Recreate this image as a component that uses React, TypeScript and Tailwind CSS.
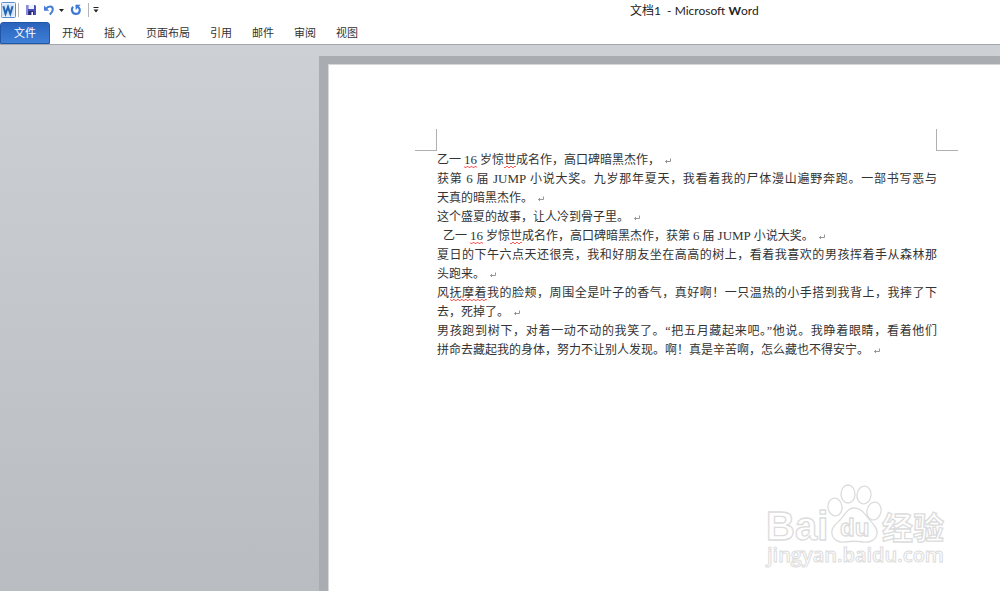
import type { ReactNode } from "react";

const tabs = ["开始", "插入", "页面布局", "引用", "邮件", "审阅", "视图"];

function Latin({ children }: { children: ReactNode }) {
  return <span className="text-[13px] leading-none">{children}</span>;
}

function Misspelt({ children }: { children: ReactNode }) {
  return (
    <span className="bg-[conic-gradient(#ff5a5a_25%,transparent_0_50%,#ff5a5a_0_75%,transparent_0)] bg-[length:4px_2px] bg-bottom bg-repeat-x pb-px">
      {children}
    </span>
  );
}

function Line({ children, full = false }: { children: ReactNode; full?: boolean }) {
  return (
    <span className={full ? "block h-[19px] whitespace-nowrap text-justify [text-align-last:justify]" : "block h-[19px] whitespace-nowrap"}>
      {children}
    </span>
  );
}

function Mark() {
  return (
    <svg viewBox="0 0 8 7" className="ml-1 inline-block h-[7px] w-2 align-[-1px]" aria-hidden="true">
      <path d="M6.5 0.5V3.5H1.5M3 2L1.5 3.5L3 5" fill="none" stroke="#8a8a8a" strokeWidth="0.9" />
    </svg>
  );
}

function WordIcon() {
  return (
    <svg viewBox="0 0 16 16" className="size-4" aria-hidden="true">
      <rect x="1.5" y="0.5" width="14" height="15" rx="1" fill="#eaf3fc" stroke="#5a8ccb" />
      <path d="M3 4h11M3 6h11M3 8h11M3 10h11M3 12h11" stroke="#b9d3ee" strokeWidth="0.8" />
      <rect x="1.5" y="2.5" width="12" height="11" fill="#cfe2f6" />
      <path d="M3.4 4.2L5.5 11.8L8 5L10.3 11.8L12.6 4.2" fill="none" stroke="#2564b4" strokeWidth="2" />
    </svg>
  );
}

function SaveIcon() {
  return (
    <svg viewBox="0 0 12 12" className="size-3" aria-hidden="true">
      <path d="M1 1H10L11 2V11H1Z" fill="#4d4fb8" />
      <path d="M1 1H3V11H1Z" fill="#8a8ce0" />
      <path d="M3.4 1H9V5H3.4Z" fill="#edf2fc" />
      <path d="M3.4 7H8.8V11H3.4Z" fill="#2b2c70" />
      <path d="M6.4 8H8V11H6.4Z" fill="#f2f4ff" />
    </svg>
  );
}

function UndoIcon() {
  return (
    <svg viewBox="0 0 12 12" className="size-3" aria-hidden="true">
      <path d="M3 5C5 1.6 9.8 1.8 9.8 5.2C9.8 7.5 8.4 8.8 6.8 10.6" fill="none" stroke="#477fd8" strokeWidth="2.1" />
      <path d="M1 1.6V6.8H6.2Z" fill="#477fd8" />
    </svg>
  );
}

function RedoIcon() {
  return (
    <svg viewBox="0 0 12 12" className="size-3" aria-hidden="true">
      <path d="M3.1 2.8C0.9 4.9 1.8 9.9 5.9 9.9C10.2 9.9 10.9 5 8 3" fill="none" stroke="#3d78d4" strokeWidth="2.1" />
      <path d="M5.4 0.8H10.6L5.8 6Z" fill="#3d78d4" />
    </svg>
  );
}

function Watermark() {
  return (
    <svg
      viewBox="0 0 190 94"
      className="absolute right-[46px] bottom-[18px] w-[190px]"
      fill="#ffffff"
      stroke="#dcdcdc"
      strokeWidth="1.3"
      aria-label="Baidu 经验"
    >
      <text x="2" y="61" fontSize="40" fontWeight="700" fontFamily="'Liberation Sans', Arial, sans-serif">Bai</text>
      <ellipse cx="71" cy="28" rx="7" ry="9" transform="rotate(-8 71 28)" />
      <ellipse cx="84" cy="15" rx="7" ry="9" />
      <ellipse cx="100" cy="16" rx="7" ry="9" transform="rotate(8 100 16)" />
      <ellipse cx="110" cy="32" rx="7" ry="9" transform="rotate(12 110 32)" />
      <path d="M90 29C83 29 81 36 76 41C71 46 67 49 68 55C69 61 75 64 81 63C87 62 93 62 99 63C106 64 112 61 113 55C114 49 109 45 105 40C100 34 97 29 90 29Z" />
      <text x="76" y="57" fontSize="24" fontWeight="700" fontFamily="'Liberation Sans', Arial, sans-serif">du</text>
      <text x="118" y="60" fontSize="31" fontWeight="700" fontFamily="'Noto Sans CJK SC', sans-serif">经验</text>
      <text x="3" y="83" fontSize="20" fontWeight="600" strokeWidth="1" fontFamily="'Open Sans', sans-serif">jingyan.baidu.com</text>
    </svg>
  );
}

export default function App() {
  return (
    <div className="flex min-h-screen flex-col overflow-hidden bg-white font-['Liberation_Sans','Noto_Sans_CJK_SC',sans-serif] text-[#333]">
      <header className="border-b border-[#a3a7ad]">
        <div className="flex h-[22px] items-start">
          <div className="flex h-5 items-center">
            <button type="button" aria-label="Word"><WordIcon /></button>
            <span className="ml-0.5 h-3.5 w-px bg-[#b5b5b5]" />
            <button type="button" aria-label="保存" className="ml-1.5"><SaveIcon /></button>
            <button type="button" aria-label="撤消" className="ml-1.5"><UndoIcon /></button>
            <button type="button" aria-label="撤消选项" className="ml-1">
              <svg viewBox="0 0 5 3" className="h-[3px] w-[5px]" aria-hidden="true"><path d="M0 0H5L2.5 3Z" fill="#222" /></svg>
            </button>
            <button type="button" aria-label="重复" className="ml-1.5"><RedoIcon /></button>
            <span className="ml-1.5 h-3.5 w-px bg-[#b5b5b5]" />
            <button type="button" aria-label="自定义快速访问工具栏" className="ml-1">
              <svg viewBox="0 0 6 6" className="size-1.5" aria-hidden="true"><path d="M0.5 0H5.5V1H0.5ZM0.5 2.6H5.5L3 5.4Z" fill="#222" /></svg>
            </button>
          </div>
          <h1 className="ml-[531px] whitespace-pre font-['Lato','Noto_Sans_CJK_SC',sans-serif] text-[12px] leading-[22px] text-[#222]">
            文档1  - Microsoft <b>W</b>ord
          </h1>
        </div>
        <nav className="flex h-[22px] text-[11px] leading-[22px]">
          <button type="button" className="mr-0.5 w-[50px] rounded-t-[3px] border border-[#2257a8] bg-linear-to-b from-[#2a63bd] to-[#3f7fd6] leading-5 text-white">
            文件
          </button>
          {tabs.map((tab) => (
            <button type="button" key={tab} className="px-2.5">{tab}</button>
          ))}
        </nav>
      </header>

      <main className="flex flex-1 bg-linear-to-b from-[#cdd1d6] to-[#b9bcc1] pt-[11px] pl-[319px]">
        <div className="flex flex-1 bg-[#a9adb2] pt-2 pl-[9px]">
          <article className="relative flex-1 border-t border-l border-[#d5d7da] bg-white pt-16 pl-[86px]">
            <div className="w-[543px]">
              <div className="flex justify-between">
                <span className="size-[22px] border-r border-b border-[#b0b0b0]" />
                <span className="size-[22px] border-b border-l border-[#b0b0b0]" />
              </div>
              <div className="pr-[21px] pl-[22px] font-['Liberation_Serif','Noto_Sans_CJK_SC',serif] text-[12px] leading-[19px] text-[#333]">
                <p>
                  <Line>乙一 <Misspelt><Latin>16</Latin></Misspelt> 岁惊<Misspelt>世</Misspelt>成名作，高口碑暗黑杰作，<Mark /></Line>
                </p>
                <p>
                  <Line full>获第 <Latin>6</Latin> 届 <Latin>JUMP</Latin> 小说大奖。九岁那年夏天，我看着我的尸体漫山遍野奔跑。一部书写恶与</Line>
                  <Line>天真的暗黑杰作。<Mark /></Line>
                </p>
                <p>
                  <Line>这个盛夏的故事，让人冷到骨子里。<Mark /></Line>
                </p>
                <p className="pl-1.5">
                  <Line>乙一 <Misspelt><Latin>16</Latin></Misspelt> 岁惊<Misspelt>世</Misspelt>成名作，高口碑暗黑杰作，获第 <Latin>6</Latin> 届 <Latin>JUMP</Latin> 小说大奖。<Mark /></Line>
                </p>
                <p>
                  <Line full>夏日的下午六点天还很亮，我和好朋友坐在高高的树上，看着我喜欢的男孩挥着手从森林那</Line>
                  <Line>头跑来。<Mark /></Line>
                </p>
                <p>
                  <Line full>风<Misspelt>抚摩着</Misspelt>我的脸颊，周围全是叶子的香气，真好啊！一只温热的小手搭到我背上，我摔了下</Line>
                  <Line>去，死掉了。<Mark /></Line>
                </p>
                <p>
                  <Line full>男孩跑到树下，对着一动不动的我笑了。“把五月藏起来吧。”他说。我睁着眼睛，看着他们</Line>
                  <Line>拼命去藏起我的身体，努力不让别人发现。啊！真是辛苦啊，怎么藏也不得安宁。<Mark /></Line>
                </p>
              </div>
            </div>
            <Watermark />
          </article>
        </div>
      </main>
    </div>
  );
}
